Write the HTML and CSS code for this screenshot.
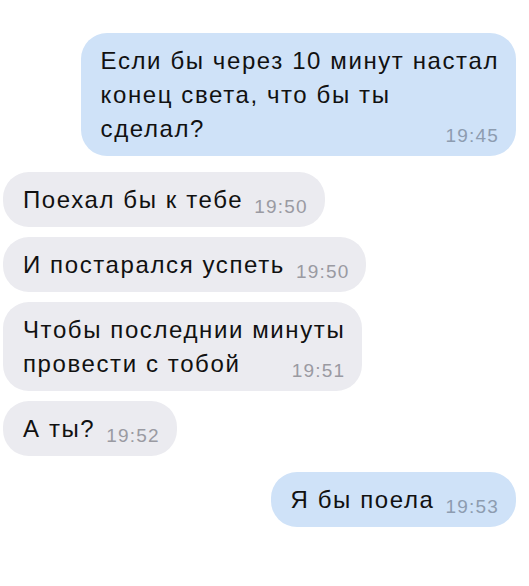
FILE: index.html
```html
<!DOCTYPE html>
<html lang="ru">
<head>
  <meta charset="UTF-8">
  <title>Чат</title>
  <link rel="stylesheet" href="styles.css">
</head>
<body>
<div class="chat">
  <div class="msg out first">
    Если бы через 10 минут настал<br>конец света, что бы ты<br>сделал?<span class="time">19:45</span>
  </div>
  <div class="msg in">
    Поехал бы к тебе<span class="time">19:50</span>
  </div>
  <div class="msg in">
    И постарался успеть<span class="time">19:50</span>
  </div>
  <div class="msg in">
    Чтобы последнии минуты<br>провести с тобой<span class="time">19:51</span>
  </div>
  <div class="msg in">
    А ты?<span class="time">19:52</span>
  </div>
  <div class="msg out last">
    Я бы поела<span class="time">19:53</span>
  </div>
</div>
</body>
</html>
```

FILE: styles.css
```css
body {
  margin: 0;
  background: #ffffff;
  font-family: "Liberation Sans", Arial, sans-serif;
  color: #111111;
}
.chat {
  display: flex;
  flex-direction: column;
  align-items: flex-start;
  gap: 10px;
  padding: 33px 13px 40px 3px;
}
.msg {
  display: flow-root;
  padding: 11px 17px 10px 20px;
  border-radius: 26px;
  font-size: 24px;
  line-height: 34px;
  letter-spacing: 1.6px;
  background: #ebebf0;
}
.msg.out {
  align-self: flex-end;
  background: #cfe2f8;
}
.msg.first {
  margin-bottom: 6px;
}
.msg.last {
  margin-top: 6px;
}
.time {
  float: right;
  margin: 14px 0 0 11px;
  font-size: 19px;
  line-height: 19px;
  letter-spacing: 1.2px;
  color: #9a9aa2;
}
.msg.out .time {
  color: #8d9cb0;
}
```
